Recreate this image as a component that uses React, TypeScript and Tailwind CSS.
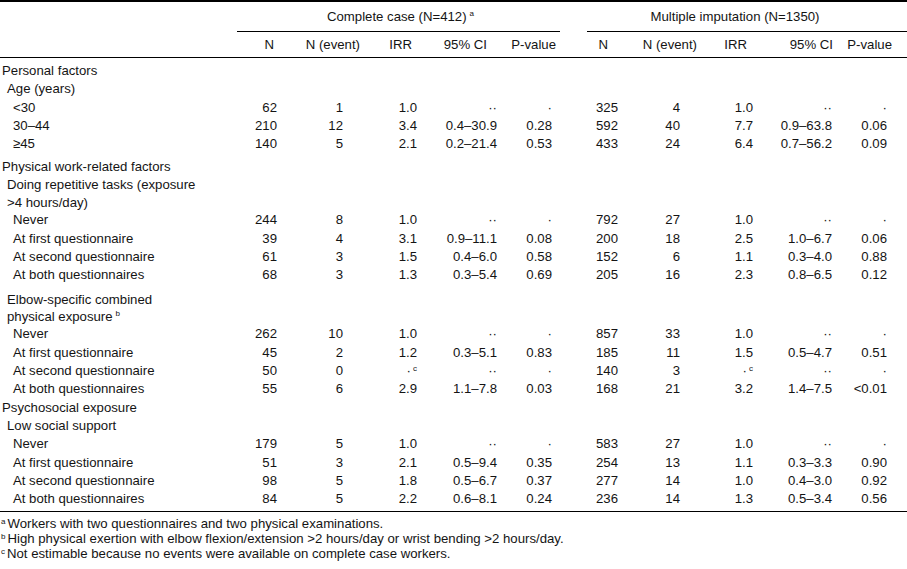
import React from "react";

const GRID =
  "grid grid-cols-[237px_53px_75px_60px_85px_50px_27px_43px_75px_60px_80px_62px]";

const VAL_PR = [
  "pr-[13px]",
  "pr-[22px]",
  "pr-[8px]",
  "pr-[13px]",
  "pr-[8px]",
  "pr-[12px]",
  "pr-[25px]",
  "pr-[12px]",
  "pr-[13px]",
  "pr-[20px]",
];

const HEAD_PR = [
  "pr-[16px]",
  "pr-[5px]",
  "pr-[13px]",
  "pr-[23px]",
  "pr-[4px]",
  "pr-[22px]",
  "pr-[8px]",
  "pr-[18px]",
  "pr-[12px]",
  "pr-[15px]",
];

const LEVEL = ["pl-[2px]", "pl-[7px]", "pl-[13px]"];

const DD = "\u00b7\u00b7";
const D = "\u00b7";

const NE = (
  <span>
    {D}
    <sup className="text-[8px] -top-[4px] ml-[2px]">c</sup>
  </span>
);

type V = React.ReactNode;

function Row({
  label,
  level,
  vals,
  extra = "",
  labelClass = "",
}: {
  label: React.ReactNode;
  level: number;
  vals?: V[];
  extra?: string;
  labelClass?: string;
}) {
  const cells: React.ReactNode[] = [];
  for (let i = 0; i < 10; i++) {
    if (i === 5) cells.push(<div key="gap" />);
    cells.push(
      <div key={i} className={"text-right whitespace-nowrap " + VAL_PR[i]}>
        {vals ? vals[i] : null}
      </div>
    );
  }
  return (
    <div className={GRID + " leading-[18.3px] " + extra}>
      <div className={LEVEL[level] + " whitespace-nowrap " + labelClass}>{label}</div>
      {cells}
    </div>
  );
}

const HEADS = ["N", "N (event)", "IRR", "95% CI", "P-value"];

export default function App() {
  return (
    <div className="w-[907px] h-[569px] bg-white text-[#141414] font-['Liberation_Sans',Arial,sans-serif] text-[13.2px] overflow-hidden">
      <div className="border-t-2 border-black">
        {/* group header */}
        <div className={GRID + " h-[30px]"}>
          <div />
          <div className="col-span-5 border-b border-black flex items-center justify-center pl-[4px]">
            <span>
              Complete case (N=412)
              <sup className="text-[8px] -top-[5px] ml-[3px]">a</sup>
            </span>
          </div>
          <div />
          <div className="col-span-5 border-b border-black flex items-center justify-center pr-[24px]">
            Multiple imputation (N=1350)
          </div>
        </div>
        {/* column header */}
        <div className={GRID + " h-[26px] border-b border-black items-center"}>
          <div />
          {HEADS.map((h, i) => (
            <div key={"a" + i} className={"text-right whitespace-nowrap " + HEAD_PR[i]}>
              {h}
            </div>
          ))}
          <div />
          {HEADS.map((h, i) => (
            <div key={"b" + i} className={"text-right whitespace-nowrap " + HEAD_PR[i + 5]}>
              {h}
            </div>
          ))}
        </div>

        <div className="pt-[4px] pb-[3px] border-b border-black">
          <Row label="Personal factors" level={0} />
          <Row label="Age (years)" level={1} />
          <Row label="<30" level={2} vals={["62", "1", "1.0", DD, D, "325", "4", "1.0", DD, D]} />
          <Row
            label="30–44"
            level={2}
            vals={["210", "12", "3.4", "0.4–30.9", "0.28", "592", "40", "7.7", "0.9–63.8", "0.06"]}
          />
          <Row
            label="≥45"
            level={2}
            vals={["140", "5", "2.1", "0.2–21.4", "0.53", "433", "24", "6.4", "0.7–56.2", "0.09"]}
          />
          <Row label="Physical work-related factors" level={0} extra="pt-[4.5px]" />
          <Row
            label={
              <>
                Doing repetitive tasks (exposure
                <br />
                &gt;4 hours/day)
              </>
            }
            level={1}
            labelClass="leading-[17.5px]"
          />
          <Row label="Never" level={2} vals={["244", "8", "1.0", DD, D, "792", "27", "1.0", DD, D]} />
          <Row
            label="At first questionnaire"
            level={2}
            vals={["39", "4", "3.1", "0.9–11.1", "0.08", "200", "18", "2.5", "1.0–6.7", "0.06"]}
          />
          <Row
            label="At second questionnaire"
            level={2}
            vals={["61", "3", "1.5", "0.4–6.0", "0.58", "152", "6", "1.1", "0.3–4.0", "0.88"]}
          />
          <Row
            label="At both questionnaires"
            level={2}
            vals={["68", "3", "1.3", "0.3–5.4", "0.69", "205", "16", "2.3", "0.8–6.5", "0.12"]}
          />
          <Row
            label={
              <>
                Elbow-specific combined
                <br />
                physical exposure
                <sup className="text-[8px] -top-[5px] ml-[3px]">b</sup>
              </>
            }
            level={1}
            extra="pt-[7px]"
            labelClass="leading-[17px]"
          />
          <Row label="Never" level={2} vals={["262", "10", "1.0", DD, D, "857", "33", "1.0", DD, D]} />
          <Row
            label="At first questionnaire"
            level={2}
            vals={["45", "2", "1.2", "0.3–5.1", "0.83", "185", "11", "1.5", "0.5–4.7", "0.51"]}
          />
          <Row
            label="At second questionnaire"
            level={2}
            vals={["50", "0", NE, DD, D, "140", "3", NE, DD, D]}
          />
          <Row
            label="At both questionnaires"
            level={2}
            vals={["55", "6", "2.9", "1.1–7.8", "0.03", "168", "21", "3.2", "1.4–7.5", "<0.01"]}
          />
          <Row label="Psychosocial exposure" level={0} />
          <Row label="Low social support" level={1} />
          <Row label="Never" level={2} vals={["179", "5", "1.0", DD, D, "583", "27", "1.0", DD, D]} />
          <Row
            label="At first questionnaire"
            level={2}
            vals={["51", "3", "2.1", "0.5–9.4", "0.35", "254", "13", "1.1", "0.3–3.3", "0.90"]}
          />
          <Row
            label="At second questionnaire"
            level={2}
            vals={["98", "5", "1.8", "0.5–6.7", "0.37", "277", "14", "1.0", "0.4–3.0", "0.92"]}
          />
          <Row
            label="At both questionnaires"
            level={2}
            vals={["84", "5", "2.2", "0.6–8.1", "0.24", "236", "14", "1.3", "0.5–3.4", "0.56"]}
          />
        </div>

        <div className="pt-[4px] leading-[15px]">
          <div className="pl-[1px]">
            <sup className="text-[8px] -top-[4px] mr-[2px]">a</sup>Workers with two questionnaires and two
            physical examinations.
          </div>
          <div className="pl-[1px]">
            <sup className="text-[8px] -top-[4px] mr-[2px]">b</sup>High physical exertion with elbow
            flexion/extension &gt;2 hours/day or wrist bending &gt;2 hours/day.
          </div>
          <div className="pl-[1px]">
            <sup className="text-[8px] -top-[4px] mr-[2px]">c</sup>Not estimable because no events were
            available on complete case workers.
          </div>
        </div>
      </div>
    </div>
  );
}
